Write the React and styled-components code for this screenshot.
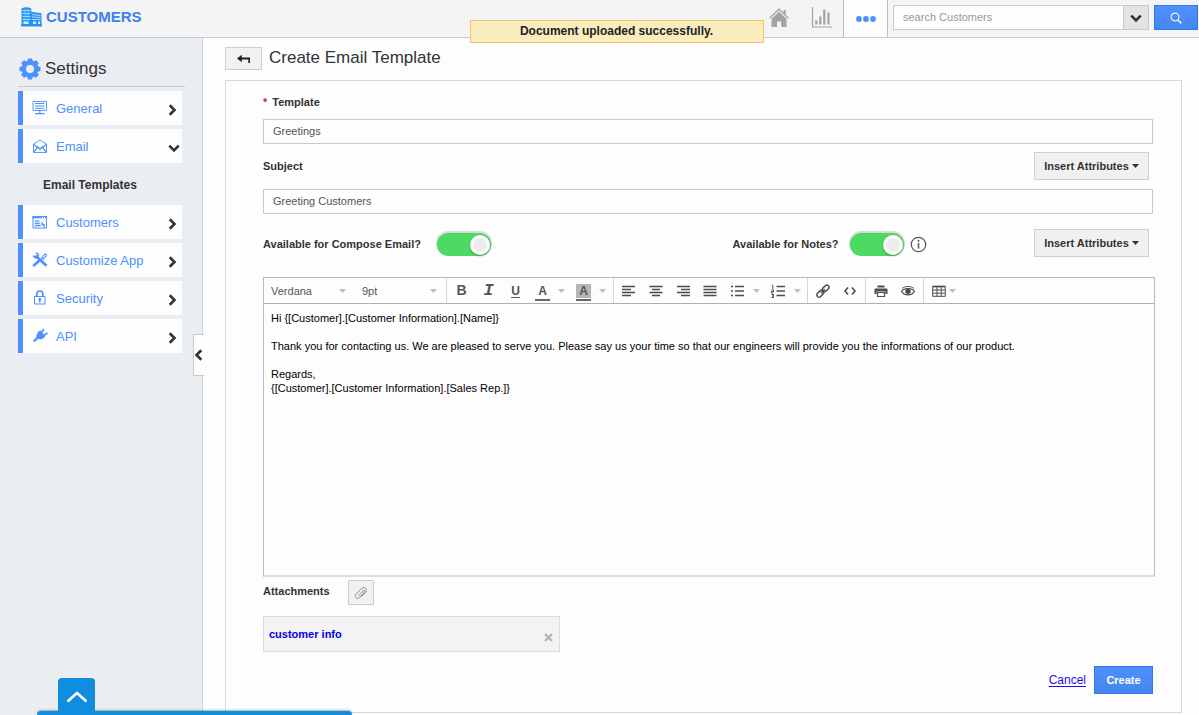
import React from "react";
import styled, { createGlobalStyle, css } from "styled-components";

const blue = "#4d90fe";

const GlobalStyle = createGlobalStyle`
  *, *::before, *::after { box-sizing: border-box; }
  body {
    margin: 0;
    background: #fdfdfd;
    color: #333;
    font-family: "Liberation Sans", Arial, sans-serif;
    font-size: 11px;
  }
  button, input, select, textarea { font: inherit; color: inherit; margin: 0; }
  button { cursor: pointer; padding: 0; }
  svg { display: block; flex: none; }
`;

const Page = styled.div`
  min-height: 100vh;
  display: flex;
  flex-direction: column;
`;

/* ---------- header ---------- */

const Header = styled.header`
  position: relative;
  display: flex;
  align-items: stretch;
  height: 38px;
  background: #f4f4f4;
  border-bottom: 1px solid #cacaca;
`;

const Brand = styled.a`
  display: flex;
  align-items: center;
  gap: 4px;
  padding: 0 0 4px 21px;
  margin-right: auto;
  color: #3f80ea;
  font-size: 15px;
  font-weight: bold;
  text-decoration: none;
`;

const Toast = styled.div`
  position: absolute;
  top: 20px;
  left: calc(50% - 130px);
  width: 294px;
  height: 23px;
  border: 1px solid #f0c36d;
  background: #f9edbe;
  color: #222;
  font-size: 12px;
  font-weight: bold;
  line-height: 21px;
  text-align: center;
`;

const HeaderTab = styled.button`
  width: 43px;
  display: flex;
  align-items: center;
  justify-content: center;
  border: 0;
  background: none;
  padding-bottom: 2px;
  ${(p) =>
    p.$active &&
    css`
      width: 45px;
      background: #fdfdfd;
      border: solid #bdbdbd;
      border-width: 0 1px;
      padding: 0;
    `}
`;

const Search = styled.form`
  display: flex;
  align-items: flex-start;
  padding: 5px 1px 0 5px;
`;

const SearchInput = styled.input`
  width: 230px;
  height: 25px;
  padding: 0 9px 1px;
  border: 1px solid #c9c9c9;
  border-right: 0;
  background: #fdfdfd;
  outline: 0;
  &::placeholder { color: #999; opacity: 1; }
`;

const SearchScope = styled.button`
  width: 26px;
  height: 25px;
  display: flex;
  align-items: center;
  justify-content: center;
  border: 1px solid #c9c9c9;
  background: #e3e3e3;
  margin-right: 5px;
`;

const SearchButton = styled.button`
  width: 44px;
  height: 25px;
  display: flex;
  align-items: center;
  justify-content: center;
  border: 1px solid #3079ed;
  background: linear-gradient(#4d90fe, #4787ed);
`;

/* ---------- sidebar ---------- */

const Body = styled.div`
  flex: 1;
  display: flex;
`;

const Sidebar = styled.aside`
  position: relative;
  width: 203px;
  flex: none;
  padding: 15px 17px 0 18px;
  background: #eaeef3;
  border-right: 1px solid #d0d3d7;
`;

const SidebarTitle = styled.h2`
  display: flex;
  align-items: center;
  gap: 4px;
  height: 34px;
  margin: 0 0 4px;
  padding: 0 0 1px 1px;
  border-bottom: 1px solid #c6cacd;
  font-size: 17px;
  font-weight: normal;
`;

const Menu = styled.nav`
  display: flex;
  flex-direction: column;
  gap: 4px;
  margin-right: 3px;
`;

const MenuItem = styled.button`
  height: 34px;
  display: flex;
  align-items: center;
  gap: 8px;
  padding: 0 ${(p) => (p.$open ? "2px" : "4px")} 0 9px;
  border: 0;
  border-left: 5px solid ${blue};
  background: #fdfdfd;
  color: ${blue};
  font-size: 13px;
  text-align: left;
  > svg:last-child { margin-top: 3px; }
`;

const MenuLabel = styled.span`
  flex: 1;
`;

const SubItem = styled.a`
  display: block;
  height: 34px;
  padding-left: 25px;
  color: #333;
  font-size: 12px;
  font-weight: bold;
  line-height: 36px;
  text-decoration: none;
`;

const Collapse = styled.button`
  position: absolute;
  top: 296px;
  right: -2px;
  width: 11px;
  height: 42px;
  display: flex;
  align-items: center;
  justify-content: center;
  border: 1px solid #c6c8ca;
  border-right: 0;
  background: #fdfdfd;
`;

/* ---------- main ---------- */

const Main = styled.main`
  flex: 1;
  min-width: 0;
  padding: 9px 17px 2px 22px;
`;

const TitleBar = styled.div`
  display: flex;
  align-items: flex-start;
  gap: 7px;
  height: 33px;
`;

const BackButton = styled.button`
  width: 37px;
  height: 23px;
  display: flex;
  align-items: center;
  justify-content: center;
  border: 1px solid #cfcfcf;
  background: #f1f1f1;
`;

const Title = styled.h1`
  margin: 0;
  font-size: 17px;
  font-weight: normal;
  line-height: 22px;
`;

const Panel = styled.form`
  padding: 0 26px 18px 37px;
  border: 1px solid #d9d9d9;
  background: #fdfdfd;
`;

const LabelRow = styled.div`
  display: flex;
  align-items: center;
  justify-content: space-between;
  height: ${(p) => (p.$tall ? "45px" : "38px")};
  padding: ${(p) => (p.$tall ? "0 6px 1px 0" : "4px 6px 0 0")};
`;

const Label = styled.label`
  font-weight: bold;
  line-height: 14px;
`;

const Required = styled.span`
  color: #e02020;
  margin-right: 5px;
`;

const TextInput = styled.input`
  display: block;
  width: calc(100% - 2px);
  height: 25px;
  padding: 0 9px 1px;
  border: 1px solid #c9c9c9;
  background: #fdfdfd;
  color: #555;
`;

const AttrButton = styled.button`
  width: 115px;
  height: 28px;
  display: flex;
  align-items: center;
  justify-content: center;
  gap: 3px;
  border: 1px solid #cfcfcf;
  background: #f0f0f0;
  color: #333;
  font-weight: bold;
`;

const Options = styled.div`
  display: grid;
  grid-template-columns: 53% 1fr auto;
  align-items: center;
  height: 63px;
  padding: 0 6px 5px 0;
`;

const Option = styled.div`
  display: flex;
  align-items: center;
  padding-top: 2px;
`;

const Toggle = styled.input`
  appearance: none;
  width: 54px;
  height: 23px;
  margin: 1px 6px 0 ${(p) => (p.$near ? "11px" : "16px")};
  padding: 1px;
  border-radius: 12px;
  background: #4cd964;
  box-shadow: 0 -1px 1px 1px #d9d9d9;
  display: flex;
  justify-content: flex-start;
  align-items: center;
  &:not(:checked) { background: #ddd; }
  &:checked { justify-content: flex-end; }
  &::before {
    content: "";
    width: 20px;
    height: 20px;
    border-radius: 50%;
    border: 3px solid #fff;
    background: #ececec;
    box-shadow: 0 1px 2px rgba(0, 0, 0, 0.3);
  }
`;

/* ---------- editor ---------- */

const Editor = styled.div`
  border: 1px solid #b9b9b9;
  border-bottom: 2px solid #dedede;
`;

const Toolbar = styled.div`
  display: flex;
  height: 26px;
  border-bottom: 1px solid #b0b0b0;
  color: #555;
`;

const SelectWrap = styled.div`
  position: relative;
  display: flex;
  align-items: center;
  width: 91px;
`;

const ToolSelect = styled.select`
  appearance: none;
  width: 100%;
  height: 25px;
  padding: 0 0 0 7px;
  border: 0;
  background: none;
  outline: 0;
`;

const SelectCaret = styled.span`
  position: absolute;
  right: 9px;
  pointer-events: none;
`;

const ToolGroup = styled.div`
  display: flex;
  padding: 0 2px 0 1px;
  border-left: 1px solid #d6d6d6;
`;

const Tool = styled.button`
  width: ${(p) => (p.$split ? "41px" : "27px")};
  display: flex;
  align-items: center;
  justify-content: ${(p) => (p.$split ? "flex-start" : "center")};
  gap: ${(p) => (p.$tight ? "2px" : "8px")};
  padding-left: ${(p) => (p.$split ? "6px" : "0")};
  border: 0;
  background: none;
`;

const Letter = styled.span`
  width: 16px;
  font-size: 14px;
  font-weight: bold;
  line-height: 15px;
  ${(p) => p.$italic && css`font-family: "Liberation Mono", monospace; font-style: italic; font-size: 17px;`}
  ${(p) => p.$under && css`font-size: 12px; line-height: 12px; text-decoration: underline; text-underline-offset: 2px;`}
`;

const ColorLetter = styled.span`
  width: 15px;
  margin-top: 3px;
  border-bottom: 2px solid #666;
  font-size: 12px;
  font-weight: bold;
  line-height: 14px;
  > span { display: block; margin: 0 0 1px; background: ${(p) => (p.$filled ? "#b5b5b5" : "none")}; }
`;

const Message = styled.textarea`
  display: block;
  width: 100%;
  height: 271px;
  padding: 7px;
  border: 0;
  outline: 0;
  resize: none;
  background: #fdfdfd;
  color: #000;
  line-height: 14px;
`;

/* ---------- attachments and actions ---------- */

const AttachRow = styled.div`
  display: flex;
  align-items: flex-start;
  gap: 18px;
  height: 39px;
  padding-top: 3px;
  line-height: 23px;
`;

const AttachLabel = styled.span`
  font-weight: bold;
`;

const AttachButton = styled.button`
  width: 26px;
  height: 25px;
  display: flex;
  align-items: center;
  justify-content: center;
  border: 1px solid #cacaca;
  border-radius: 1px;
  background: #f1f1f1;
`;

const Attachment = styled.div`
  display: flex;
  align-items: center;
  justify-content: space-between;
  width: 297px;
  height: 36px;
  padding: 0 6px 0 5px;
  border: 1px solid #dcdcdc;
  background: #f3f3f3;
`;

const FileLink = styled.a`
  color: #0000ee;
  font-weight: bold;
  text-decoration: none;
`;

const RemoveButton = styled.button`
  border: 0;
  background: none;
  padding-top: 7px;
`;

const Actions = styled.div`
  display: flex;
  align-items: center;
  justify-content: flex-end;
  gap: 8px;
  margin-top: 14px;
  padding-right: 2px;
`;

const Cancel = styled.a`
  color: #1a0dee;
  font-size: 12px;
  text-underline-offset: 2px;
`;

const Create = styled.button`
  width: 59px;
  height: 28px;
  border: 1px solid #3079ed;
  background: linear-gradient(#4d90fe, #4787ed);
  color: #fff;
  font-weight: bold;
`;

/* ---------- docked bar ---------- */

const Dock = styled.div`
  position: fixed;
  left: 37px;
  bottom: 0;
  width: 315px;
  display: flex;
  flex-direction: column;
  align-items: flex-start;
  &::after {
    content: "";
    width: 100%;
    height: 4px;
    border-radius: 4px 4px 0 0;
    background: #118de0;
    box-shadow: 0 -1px 2px rgba(0, 0, 0, 0.3);
  }
`;

const DockTab = styled.button`
  position: relative;
  z-index: 1;
  width: 37px;
  height: 33px;
  margin-left: 21px;
  padding-top: 4px;
  display: flex;
  align-items: center;
  justify-content: center;
  border: 0;
  border-radius: 4px 4px 0 0;
  background: #118de0;
`;

/* ---------- icons ---------- */

const Chevron = ({ dir = "right", color = "#333" }) => {
  const turn = { right: 0, down: 90, left: 180 }[dir];
  return (
    <svg width="12" height="12" viewBox="0 0 12 12" fill="none" stroke={color} strokeWidth="2.6">
      <path d="M3.7 1.3 8.5 6 3.7 10.7" transform={`rotate(${turn} 6 6)`} />
    </svg>
  );
};

const Caret = ({ color = "#b9bfc4" }) => (
  <svg width="7" height="4" viewBox="0 0 7 4" fill={color}>
    <path d="M0 0h7L3.5 4z" />
  </svg>
);

const LogoIcon = () => (
  <svg width="21" height="20" viewBox="0 0 21 20" fill="#2196f3">
    <path d="M.5 1.500Q5.500 -1 10.300 1.500V18H.5z" />
    <path d="M10 4.800l10.500 1.400V18H10z" />
    <path d="M0 17h21v2.500H0z" />
    <path d="M1.500 3.500h8M1.500 6.500h8M1.500 9.500h8M1.500 12.500h8" stroke="#cfe8fd" strokeWidth=".8" />
    <path d="M11 7.500l8.500 1M11 10l8.500.5M11 12.500h8.500" stroke="#cfe8fd" strokeWidth=".8" />
    <path d="M4 2v12M6.900 2v12" stroke="#9dd0fa" strokeWidth=".6" />
    <path d="M2.500 14.500h5v2.500h-5zM12 14.500h3V17h-3zM17 14.500h2V17h-2z" fill="#d5ebfe" />
  </svg>
);

const HomeIcon = () => (
  <svg width="20" height="20" viewBox="0 0 20 20" fill="#a3a3a3">
    <path d="M.5 10.200 10 1.200l9.500 9" fill="none" stroke="#a3a3a3" strokeWidth="1.300" />
    <path d="M14.500 2h2.200v5l-2.200-2z" />
    <path d="M10 3.700l7.500 7.100V19h-5.300v-5.500H8V19H2.500v-8.200z" />
  </svg>
);

const ChartIcon = () => (
  <svg width="21" height="21" viewBox="0 0 21 21" stroke="#a3a3a3" fill="none">
    <path d="M1.500 0v20H21" strokeWidth="1.200" />
    <path d="M5.300 17.500v-4M9.300 17.500v-8M13.300 17.500v-15M17.500 17.500V5.500" strokeWidth="2.200" />
  </svg>
);

const DotsIcon = () => (
  <svg width="20" height="6" viewBox="0 0 20 6" fill={blue}>
    <circle cx="3" cy="3" r="2.900" />
    <circle cx="10" cy="3" r="2.900" />
    <circle cx="17" cy="3" r="2.900" />
  </svg>
);

const SearchIcon = () => (
  <svg width="12" height="12" viewBox="0 0 12 12" fill="none" stroke="#e9f1ff" strokeWidth="1.200">
    <circle cx="5" cy="5" r="3.900" />
    <path d="M8 8l3.300 3.300" strokeWidth="1.700" />
  </svg>
);

const GearIcon = () => (
  <svg width="22" height="22" viewBox="0 0 22 22">
    <g fill={blue}>
      {[0, 45, 90, 135].map((a) => (
        <path key={a} d="M8.200 3 9 .5h4L13.800 3v16l-.8 2.500H9L8.200 19z" transform={`rotate(${a} 11 11)`} />
      ))}
      <circle cx="11" cy="11" r="8.300" />
    </g>
    <circle cx="11" cy="11" r="4" fill="#eaeef3" />
  </svg>
);

const menuIcons = {
  general: (
    <g fill="none" stroke={blue}>
      <path d="M1 1.500h13.500v9H1z" strokeWidth=".9" />
      <path d="M3 3.500h9.500M3 6h9.500M3 8.300h9.500" strokeWidth="1.100" />
      <path d="M7.800 10.500v3M3 13.600h9.500" strokeWidth="1.100" />
    </g>
  ),
  email: (
    <g fill="none" stroke={blue}>
      <path d="M1.500 6.200 8 2l6.500 4.200v8.300h-13z" strokeWidth=".9" />
      <path d="M1.500 14.200 6 9l2 2.200L10 9l4.500 5.200M1.800 6.500 6 10M14.200 6.500 10 10" strokeWidth="1.300" />
    </g>
  ),
  customers: (
    <g fill="none" stroke={blue}>
      <path d="M1 2.500h13.500v11.500H1z" />
      <path d="M.5 3.200h9.500M11 3.200h1M13 3.200h2" strokeWidth="2.200" />
      <path d="M2.800 7.200h4.700M2.800 9.500h5M2.800 11.700h6M10 8v2.500h2v3" strokeWidth="1.300" />
    </g>
  ),
  customize: (
    <g fill="none" stroke={blue}>
      <path d="M3.500 3.500 14.500 13.800" strokeWidth="2.600" />
      <path d="M1.500 3.500a3 3 0 0 0 4 2.200l1-2.500A3 3 0 0 0 4 1" strokeWidth="1.500" />
      <path d="M1.200 14 8 8" strokeWidth="2.500" />
      <path d="M9.500 6 13 2l1.600 1.200-3.300 4z" strokeWidth="1.100" />
    </g>
  ),
  security: (
    <g fill="none" stroke={blue}>
      <path d="M2.500 6.500h10.500v7.500H2.500z" />
      <path d="M4.800 6.500V4a3 3 0 0 1 6 0v2.500" strokeWidth="1.700" />
      <path d="M7.800 8v4.500" strokeWidth="1.600" />
      <path d="M6.500 9.200h2.600" strokeWidth="1.500" />
    </g>
  ),
  api: (
    <g fill={blue}>
      <path d="M8.500 2.200 13.300 8.200c-1.500 2.500-4.300 3.700-6.800 2.500L2.500 13.900.800 12.800 4.300 9.500C4 6.300 6 3.500 8.500 2.200z" />
      <path d="M9.800 4.200 11.800 1M12 7.300l3.500-2.300" stroke={blue} strokeWidth="1.700" />
    </g>
  ),
};

const MenuIcon = ({ name }) => (
  <svg width="16" height="16" viewBox="0 0 16 16">{menuIcons[name]}</svg>
);

const toolIcons = {
  left: <path d="M1 3.500h13M1 6.500h9M1 9.500h13M1 12.500h9" />,
  center: <path d="M1.500 3.500h13M4 6.500h8M1.500 9.500h13M4 12.500h8" />,
  right: <path d="M2 3.500h13M6 6.500h9M2 9.500h13M6 12.500h9" />,
  justify: <path d="M1.500 3.500h13M1.500 6.500h13M1.500 9.500h13M1.500 12.500h13" />,
  bullets: <path d="M6 3.500h9M6 8h9M6 12.500h9M2 3.500h2M2 8h2M2 12.500h2" />,
  numbers: (
    <>
      <path d="M6.500 3.500h8.500M6.500 8h8.500M6.500 12.500h8.500" />
      <path d="M1.800 2.200h1V6M1.500 7h2v1.500h-2V10h2M1.500 11.500h2v3h-2M2 13h1.500" strokeWidth="1" />
    </>
  ),
  link: (
    <g strokeWidth="1.500">
      <rect x="7" y="3.200" width="7.500" height="4.400" rx="2.200" transform="rotate(-45 10.700 5.400)" />
      <rect x="1.500" y="8.600" width="7.500" height="4.400" rx="2.200" transform="rotate(-45 5.200 10.800)" />
      <path d="M6 10.200 10 6.200" strokeWidth="1.500" />
    </g>
  ),
  code: <path d="M6 4.500 3 8l3 3.500M10 4.500 13 8l-3 3.500" strokeWidth="1.600" />,
  print: (
    <g fill="#4d4d4d" stroke="none">
      <path d="M4.500 2.500h7v2h-7zM2.500 5.500h11a1 1 0 0 1 1 1V11h-2V8.500h-9V11h-2V6.500a1 1 0 0 1 1-1z" />
      <path d="M4.500 9.500h7v4h-7z" fill="#fdfdfd" stroke="#4d4d4d" strokeWidth="1.200" />
    </g>
  ),
  eye: (
    <>
      <path d="M1.500 8.500C4 4.500 12 4.500 14.500 8.500 12 13 4 13 1.500 8.500z" strokeWidth="1.200" />
      <path d="M2 5.500C5 2.800 11 2.800 14 5.500" strokeWidth="1" />
      <circle cx="8" cy="8.300" r="2" fill="#4d4d4d" strokeWidth="1.500" />
    </>
  ),
  table: (
    <>
      <path d="M1.700 3.500h12.600v9.800H1.700zM1.700 7h12.600M1.700 10.200h12.600M6 3.500v9.800M10.200 3.500v9.800" strokeWidth="1" />
      <path d="M1.700 3.500h12.600" strokeWidth="1.700" />
    </>
  ),
};

const ToolIcon = ({ name }) => (
  <svg width="16" height="16" viewBox="0 0 16 16" fill="none" stroke="#4d4d4d" strokeWidth="1.700">
    {toolIcons[name]}
  </svg>
);

const BackIcon = () => (
  <svg width="14" height="10" viewBox="0 0 14 10" fill="#222">
    <path d="M0 4.600 4.800.8v2.700H13V9h-1.700V5.500H4.800v2.800z" />
  </svg>
);

const InfoIcon = () => (
  <svg width="17" height="17" viewBox="0 0 17 17" fill="none" stroke="#555">
    <circle cx="8.500" cy="8.500" r="7.200" strokeWidth="1.200" />
    <path d="M8.500 7v5.500" strokeWidth="1.500" />
    <path d="M8.500 4v1.700" strokeWidth="1.700" />
  </svg>
);

const ClipIcon = () => (
  <svg width="14" height="14" viewBox="0 0 14 14" fill="none" stroke="#8c8c8c" strokeWidth="1">
    <path d="M4.500 9.800 9.300 4.800c1-1 2.200.2 1.300 1.200l-4.800 5.200c-2.300 2.400-6 .2-3.800-2.700l4.800-5.300c3-3.200 7.500-.8 5 2.600L7.600 10.500" />
  </svg>
);

const CrossIcon = () => (
  <svg width="9" height="9" viewBox="0 0 9 9" stroke="#b5b5b5" strokeWidth="2.400">
    <path d="M1 1l7 7M8 1 1 8" />
  </svg>
);

const UpIcon = () => (
  <svg width="22" height="12" viewBox="0 0 22 12" fill="none" stroke="#fff" strokeWidth="2.600">
    <path d="M1.500 10.500 11 2l9.500 8.500" />
  </svg>
);

/* ---------- parts ---------- */

const Entry = ({ icon, label, open }) => (
  <MenuItem type="button" $open={open} aria-expanded={!!open}>
    <MenuIcon name={icon} />
    <MenuLabel>{label}</MenuLabel>
    <Chevron dir={open ? "down" : "right"} />
  </MenuItem>
);

const IconTool = ({ name, split, tight }) => (
  <Tool type="button" $split={split} $tight={tight} aria-label={name}>
    <ToolIcon name={name} />
    {split && <Caret />}
  </Tool>
);

const PickList = ({ label, value }) => (
  <SelectWrap>
    <ToolSelect aria-label={label} defaultValue={value}>
      <option>{value}</option>
    </ToolSelect>
    <SelectCaret><Caret /></SelectCaret>
  </SelectWrap>
);

const InsertAttributes = () => (
  <AttrButton type="button">
    Insert Attributes <Caret color="#333" />
  </AttrButton>
);

const message = `Hi {[Customer].[Customer Information].[Name]}

Thank you for contacting us. We are pleased to serve you. Please say us your time so that our engineers will provide you the informations of our product.

Regards,
{[Customer].[Customer Information].[Sales Rep.]}`;

export default function App() {
  return (
    <Page>
      <GlobalStyle />
      <Header>
        <Brand href="#"><LogoIcon />CUSTOMERS</Brand>
        <HeaderTab type="button" aria-label="Home"><HomeIcon /></HeaderTab>
        <HeaderTab type="button" aria-label="Reports"><ChartIcon /></HeaderTab>
        <HeaderTab type="button" aria-label="More" $active><DotsIcon /></HeaderTab>
        <Search>
          <SearchInput aria-label="Search" placeholder="search Customers" />
          <SearchScope type="button" aria-label="Search scope"><Chevron dir="down" /></SearchScope>
          <SearchButton type="submit" aria-label="Search"><SearchIcon /></SearchButton>
        </Search>
        <Toast role="status">Document uploaded successfully.</Toast>
      </Header>
      <Body>
        <Sidebar>
          <SidebarTitle><GearIcon />Settings</SidebarTitle>
          <Menu>
            <Entry icon="general" label="General" />
            <Entry icon="email" label="Email" open />
            <SubItem href="#">Email Templates</SubItem>
            <Entry icon="customers" label="Customers" />
            <Entry icon="customize" label="Customize App" />
            <Entry icon="security" label="Security" />
            <Entry icon="api" label="API" />
          </Menu>
          <Collapse type="button" aria-label="Collapse sidebar"><Chevron dir="left" /></Collapse>
        </Sidebar>
        <Main>
          <TitleBar>
            <BackButton type="button" aria-label="Back"><BackIcon /></BackButton>
            <Title>Create Email Template</Title>
          </TitleBar>
          <Panel>
            <LabelRow>
              <Label htmlFor="template"><Required>*</Required>Template</Label>
            </LabelRow>
            <TextInput id="template" defaultValue="Greetings" />
            <LabelRow $tall>
              <Label htmlFor="subject">Subject</Label>
              <InsertAttributes />
            </LabelRow>
            <TextInput id="subject" defaultValue="Greeting Customers" />
            <Options>
              <Option>
                <Label htmlFor="compose">Available for Compose Email?</Label>
                <Toggle id="compose" type="checkbox" defaultChecked />
              </Option>
              <Option>
                <Label htmlFor="notes">Available for Notes?</Label>
                <Toggle id="notes" type="checkbox" defaultChecked $near />
                <InfoIcon />
              </Option>
              <InsertAttributes />
            </Options>
            <Editor>
              <Toolbar>
                <PickList label="Font" value="Verdana" />
                <PickList label="Size" value="9pt" />
                <ToolGroup>
                  <Tool type="button"><Letter>B</Letter></Tool>
                  <Tool type="button"><Letter $italic>I</Letter></Tool>
                  <Tool type="button"><Letter $under>U</Letter></Tool>
                  <Tool type="button" $split><ColorLetter><span>A</span></ColorLetter><Caret /></Tool>
                  <Tool type="button" $split><ColorLetter $filled><span>A</span></ColorLetter><Caret /></Tool>
                </ToolGroup>
                <ToolGroup>
                  <IconTool name="left" />
                  <IconTool name="center" />
                  <IconTool name="right" />
                  <IconTool name="justify" />
                  <IconTool name="bullets" split />
                  <IconTool name="numbers" split />
                </ToolGroup>
                <ToolGroup>
                  <IconTool name="link" />
                  <IconTool name="code" />
                </ToolGroup>
                <ToolGroup>
                  <IconTool name="print" />
                  <IconTool name="eye" />
                </ToolGroup>
                <ToolGroup>
                  <IconTool name="table" split tight />
                </ToolGroup>
              </Toolbar>
              <Message aria-label="Message" defaultValue={message} spellCheck={false} />
            </Editor>
            <AttachRow>
              <AttachLabel>Attachments</AttachLabel>
              <AttachButton type="button" aria-label="Attach a file"><ClipIcon /></AttachButton>
            </AttachRow>
            <Attachment>
              <FileLink href="#">customer info</FileLink>
              <RemoveButton type="button" aria-label="Remove attachment"><CrossIcon /></RemoveButton>
            </Attachment>
            <Actions>
              <Cancel href="#">Cancel</Cancel>
              <Create type="button">Create</Create>
            </Actions>
          </Panel>
        </Main>
      </Body>
      <Dock>
        <DockTab type="button" aria-label="Open dock"><UpIcon /></DockTab>
      </Dock>
    </Page>
  );
}
